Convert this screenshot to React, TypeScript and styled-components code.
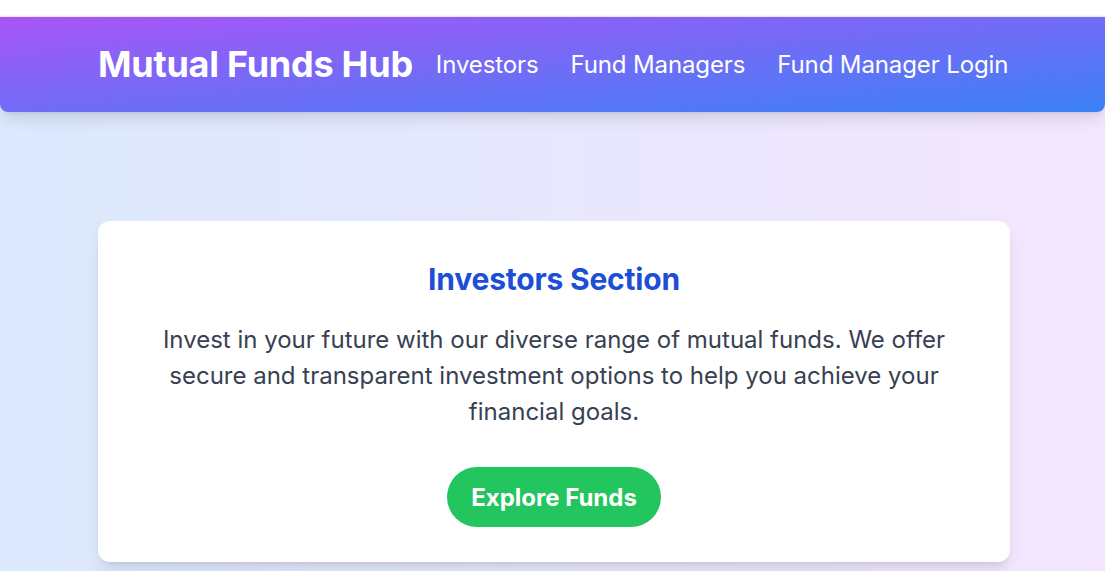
import React from "react";
import styled, { createGlobalStyle } from "styled-components";

const GlobalStyle = createGlobalStyle`
  html, body {
    margin: 0;
    padding: 0;
    background: #ffffff;
    font-family: Inter, "Noto Sans", Arial, sans-serif;
  }
  * { box-sizing: border-box; }
`;

const Page = styled.div`
  margin-top: 17px;
  min-height: 554px;
  background: linear-gradient(to right, #dbe8fd, #f3e6fe);
`;

const Header = styled.header`
  height: 95px;
  background: linear-gradient(to bottom right, #a855f7, #3b82f6);
  border-radius: 0 0 8px 8px;
  box-shadow: 0 10px 15px -3px rgba(0, 0, 0, 0.1), 0 4px 6px -4px rgba(0, 0, 0, 0.1),
    0 -1px 2px rgba(0, 0, 0, 0.12);
  display: flex;
  align-items: center;
`;

const Container = styled.div`
  width: 912px;
  margin-left: calc(50% - 454.5px);
  display: flex;
  align-items: center;
`;

const Brand = styled.h1`
  margin: 0 23px 2px 0;
  font-size: 36px;
  line-height: 40px;
  font-weight: 700;
  letter-spacing: -0.25px;
  color: #ffffff;
  white-space: nowrap;
`;

const Nav = styled.nav`
  display: flex;
  gap: 32px;
`;

const NavLink = styled.a`
  color: #ffffff;
  font-size: 24px;
  line-height: 32px;
  letter-spacing: -0.12px;
  text-decoration: none;
  white-space: nowrap;
`;

const Main = styled.main`
  padding-top: 109px;
`;

const Card = styled.section`
  width: 912px;
  margin-left: calc(50% - 454.5px);
  background: #ffffff;
  border-radius: 12px;
  box-shadow: 0 10px 15px -3px rgba(0, 0, 0, 0.1), 0 4px 6px -4px rgba(0, 0, 0, 0.1);
  padding: 40px 40px 35px;
  display: flex;
  flex-direction: column;
  align-items: center;
  text-align: center;
`;

const Title = styled.h2`
  margin: 0 0 25px;
  font-size: 30px;
  line-height: 36px;
  font-weight: 700;
  letter-spacing: -0.2px;
  color: #1d4ed8;
`;

const Text = styled.p`
  margin: 0 0 37px;
  font-size: 24px;
  line-height: 36px;
  color: #374151;
`;

const Button = styled.button`
  height: 60px;
  padding: 0 24px;
  border: none;
  border-radius: 9999px;
  background: #22c55e;
  color: #ffffff;
  font-family: inherit;
  font-size: 24px;
  font-weight: 700;
  cursor: pointer;
`;

export default function App() {
  return (
    <>
      <GlobalStyle />
      <Page>
        <Header>
          <Container>
            <Brand>Mutual Funds Hub</Brand>
            <Nav>
              <NavLink href="#">Investors</NavLink>
              <NavLink href="#">Fund Managers</NavLink>
              <NavLink href="#">Fund Manager Login</NavLink>
            </Nav>
          </Container>
        </Header>
        <Main>
          <Card>
            <Title>Investors Section</Title>
            <Text>
              Invest in your future with our diverse range of mutual funds. We offer secure and
              transparent investment options to help you achieve your financial goals.
            </Text>
            <Button>Explore Funds</Button>
          </Card>
        </Main>
      </Page>
    </>
  );
}
